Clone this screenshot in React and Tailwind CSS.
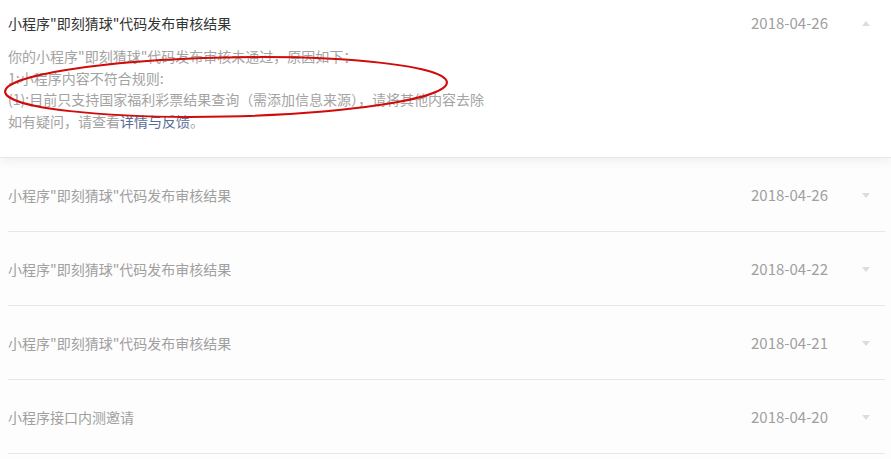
import React from 'react';

const rows = [
  { title: '小程序"即刻猜球"代码发布审核结果', date: '2018-04-26' },
  { title: '小程序"即刻猜球"代码发布审核结果', date: '2018-04-22' },
  { title: '小程序"即刻猜球"代码发布审核结果', date: '2018-04-21' },
  { title: '小程序接口内测邀请', date: '2018-04-20' },
];

const Arrow = ({ up }) => (
  <svg width="8" height="5" viewBox="0 0 8 5" className="block">
    {up ? <path d="M0 5 L4 0 L8 5 Z" fill="#dcdcdc" /> : <path d="M0 0 L4 5 L8 0 Z" fill="#dcdcdc" />}
  </svg>
);

const App = () => {
  return (
    <div
      className="relative w-[891px] h-[459px] overflow-hidden bg-[#fdfdfd] text-[14px]"
      style={{ fontFamily: '"Noto Sans CJK SC", "Liberation Sans", sans-serif' }}
    >
      {/* 展开的消息 */}
      <div className="relative z-10 h-[158px] bg-white border-b border-[#e6e6e6] shadow-[0_3px_10px_rgba(0,0,0,0.06)] px-2 pt-3">
        <div className="flex items-center leading-[22px]">
          <div className="flex-1 text-[#333]">小程序"即刻猜球"代码发布审核结果</div>
          <div className="text-[#a0a0a0] text-[15px]">2018-04-26</div>
          <div className="ml-[34px] mr-[13px] w-[8px]">
            <Arrow up />
          </div>
        </div>
        <div className="mt-[12px] leading-[21.5px] text-[#a3a3a3]">
          <p>你的小程序"即刻猜球"代码发布审核未通过，原因如下：</p>
          <p>1:小程序内容不符合规则:</p>
          <p>(1):目前只支持国家福利彩票结果查询（需添加信息来源），请将其他内容去除</p>
          <p>
            如有疑问，请查看<span className="text-[#576b95]">详情与反馈</span>。
          </p>
        </div>
      </div>

      {/* 收起的消息列表 */}
      <div className="ml-2 mr-[6px]">
        {rows.map((r, i) => (
          <div key={i} className="h-[74px] flex items-center border-b border-[#e8e8e8] pt-[1px] leading-[22px]">
            <div className="flex-1 text-[#a0a0a0]">{r.title}</div>
            <div className="text-[#a0a0a0] text-[15px]">{r.date}</div>
            <div className="ml-[34px] mr-[15px] w-[8px]">
              <Arrow />
            </div>
          </div>
        ))}
      </div>

      {/* 红色圈注 */}
      <svg className="absolute left-0 top-0 z-20 pointer-events-none" width="891" height="459">
        <ellipse
          cx="226"
          cy="87"
          rx="221"
          ry="29.5"
          transform="rotate(-1.2 226 87)"
          fill="none"
          stroke="#d10a0a"
          strokeWidth="2"
        />
      </svg>
    </div>
  );
};

export default App;
